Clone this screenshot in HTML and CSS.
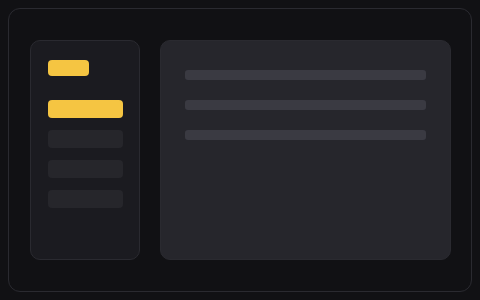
FILE: index.html
```html
<!DOCTYPE html>
<html>
<head>
<title>Layout</title>
<link rel="stylesheet" href="styles.css">
</head>
<body>

<div class="frame">

  <div class="side">
    <div class="logo"></div>
    <div class="item on"></div>
    <div class="item"></div>
    <div class="item"></div>
    <div class="item"></div>
  </div>

  <div class="main">
    <div class="line"></div>
    <div class="line"></div>
    <div class="line"></div>
  </div>

</div>

</body>
</html>
```

FILE: styles.css
```css
html, body { margin: 0; padding: 0; }
body { background-color: #111114;
       width: 480px;
       height: 300px;
       padding: 8px;
       box-sizing: border-box; }

.frame { display: flex;
         gap: 20px;
         height: 284px;
         box-sizing: border-box;
         border: 1px solid #2a2a30;
         border-radius: 12px;
         padding: 31px 20px 31px 21px; }

.side { width: 110px;
        box-sizing: border-box;
        background-color: #1b1b20;
        border: 1px solid #2a2a30;
        border-radius: 10px;
        padding: 19px 17px;
        display: flex;
        flex-direction: column;
        gap: 12px; }

.logo { width: 41px;
        height: 16px;
        border-radius: 4px;
        background-color: #f5c542;
        margin-bottom: 12px; }

.item { width: 75px;
        height: 18px;
        border-radius: 4px;
        background-color: #26262b; }

.item.on { background-color: #f5c542; }

.main { flex: 1;
        background-color: #26262c;
        border: 1px solid #2a2a30;
        border-radius: 10px;
        padding: 29px 24px;
        display: flex;
        flex-direction: column;
        gap: 20px; }

.line { height: 10px;
        border-radius: 3px;
        background-color: #3a3a42; }
```
